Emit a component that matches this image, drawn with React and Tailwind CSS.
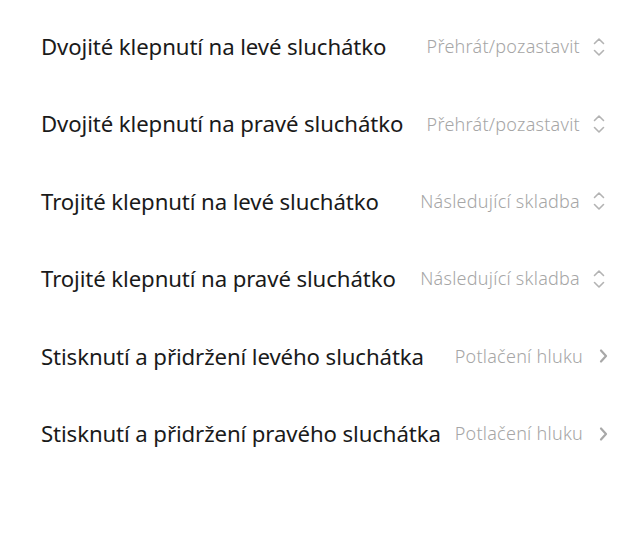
import React from "react";

const rows = [
  { title: "Dvojité klepnutí na levé sluchátko", value: "Přehrát/pozastavit", icon: "updown" },
  { title: "Dvojité klepnutí na pravé sluchátko", value: "Přehrát/pozastavit", icon: "updown" },
  { title: "Trojité klepnutí na levé sluchátko", value: "Následující skladba", icon: "updown" },
  { title: "Trojité klepnutí na pravé sluchátko", value: "Následující skladba", icon: "updown" },
  { title: "Stisknutí a přidržení levého sluchátka", value: "Potlačení hluku", icon: "right" },
  { title: "Stisknutí a přidržení pravého sluchátka", value: "Potlačení hluku", icon: "right" },
];

function UpDown() {
  return (
    <svg width="16" height="22" viewBox="0 0 16 22" fill="none" className="shrink-0">
      <path d="M2.5 7.5 L7 3 L11.5 7.5" stroke="#b3b3b3" strokeWidth="1.6" strokeLinecap="round" strokeLinejoin="round" />
      <path d="M2.5 14.5 L7 19 L11.5 14.5" stroke="#b3b3b3" strokeWidth="1.6" strokeLinecap="round" strokeLinejoin="round" />
    </svg>
  );
}

function Right() {
  return (
    <svg width="10" height="16" viewBox="0 0 10 16" fill="none" className="shrink-0">
      <path d="M3 2.5 L8 8 L3 13.5" stroke="#a8a8a8" strokeWidth="2.2" strokeLinecap="round" strokeLinejoin="round" />
    </svg>
  );
}

export default function App() {
  return (
    <div
      className="w-[640px] h-[560px] bg-white pt-[8px]"
      style={{ fontFamily: '"Noto Sans", "Open Sans", sans-serif' }}
    >
      {rows.map((r, i) => (
        <div key={i} className="h-[77.4px] flex items-center pl-[41px] pr-[32px]">
          <div className="flex-1 text-[22.2px] text-[#1a1a1a] whitespace-nowrap tracking-[-0.1px]">
            {r.title}
          </div>
          <div className="flex items-center">
            <span className="text-[18px] tracking-[0.25px] text-[#a6a6a6] whitespace-nowrap font-light">{r.value}</span>
            {r.icon === "updown" ? (
              <span className="ml-[12px] flex"><UpDown /></span>
            ) : (
              <span className="ml-[15px] flex"><Right /></span>
            )}
          </div>
        </div>
      ))}
    </div>
  );
}
